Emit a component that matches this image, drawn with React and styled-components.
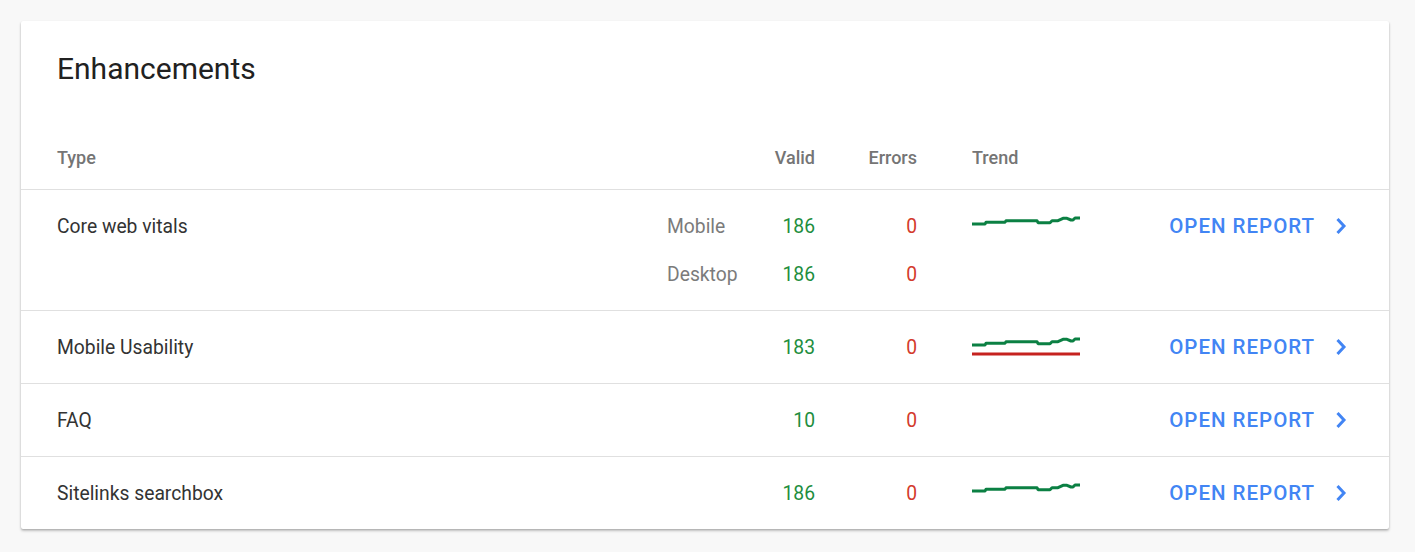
import React from "react";
import styled, { createGlobalStyle } from "styled-components";

const Global = createGlobalStyle`
  html, body { margin: 0; padding: 0; background: #f8f8f8; }
  body { font-family: Roboto, "Noto Sans", Arial, sans-serif; }
  * { box-sizing: border-box; }
`;

const Page = styled.div`
  padding: 21px 26px 23px 21px;
`;

const Card = styled.section`
  background: #fff;
  border-radius: 2px;
  box-shadow: 0 1px 2px rgba(0,0,0,0.18), 0 2px 3px rgba(0,0,0,0.18);
`;

const Title = styled.h2`
  margin: 0;
  padding: 30px 36px 0;
  height: 66px;
  font-size: 30px;
  line-height: 36px;
  font-weight: 400;
  color: #212121;
`;

const COLS = "1fr 80px 68px 102px 163px 267px";

const HeaderRow = styled.div`
  display: grid;
  grid-template-columns: ${COLS};
  margin-top: 47px;
  padding: 0 42px 7px 36px;
  height: 55px;
  align-items: center;
  font-size: 18px;
  font-weight: 500;
  color: #757575;
`;

const HeadCell = styled.div`
  line-height: 48px;
  text-align: ${(p) => (p.$right ? "right" : "left")};
  padding-left: ${(p) => (p.$trend ? "55px" : "0")};
`;

const Row = styled.div`
  display: grid;
  grid-template-columns: ${COLS};
  grid-auto-rows: 48px;
  align-items: center;
  border-top: 1px solid #e0e0e0;
  padding: 12px 42px 12px 36px;
  font-size: 19.3px;
  color: #333;
`;

const TypeCell = styled.div`
  grid-column: 1;
  grid-row: 1;
  color: #333;
`;

const DeviceCell = styled.div`
  grid-column: 2;
  color: #7b7b7b;
`;

const NumCell = styled.div`
  grid-column: ${(p) => p.$col};
  text-align: right;
  color: ${(p) => (p.$kind === "valid" ? "#1e8e3e" : "#d33a2c")};
`;

const TrendCell = styled.div`
  grid-column: 5;
  padding-left: 55px;
  display: flex;
  align-items: center;
  height: 20px;
`;

const ActionCell = styled.a`
  grid-column: 6;
  grid-row: 1;
  justify-self: end;
  display: flex;
  align-items: center;
  gap: 20px;
  color: #4285f4;
  font-size: 20.5px;
  font-weight: 500;
  letter-spacing: 1px;
  text-transform: uppercase;
  text-decoration: none;
  cursor: pointer;
`;

const GREEN = [
  [0, 8], [13, 8], [14, 6.3], [33, 6.3], [34, 4.7], [65, 4.7], [66, 6.7],
  [78, 6.7], [80, 4.7], [86, 4.7], [91, 2.3], [95, 2.3], [99, 4], [101, 4],
  [103, 2], [108, 2],
];

function Sparkline({ red }) {
  const pts = GREEN.map(([x, y]) => `${x},${y}`).join(" ");
  return (
    <svg width="108" height="20" viewBox="0 0 108 20">
      <polyline points={pts} fill="none" stroke="#0b8043" strokeWidth="3" strokeLinejoin="round" />
      {red && <line x1="0" y1="17" x2="108" y2="17" stroke="#c5221f" strokeWidth="3" />}
    </svg>
  );
}

function Chevron() {
  return (
    <svg width="12" height="18" viewBox="0 0 12 18">
      <path d="M2.5 2 L9 9 L2.5 16" fill="none" stroke="#4285f4" strokeWidth="3" />
    </svg>
  );
}

const rows = [
  {
    type: "Core web vitals",
    lines: [
      { device: "Mobile", valid: 186, errors: 0, trend: true },
      { device: "Desktop", valid: 186, errors: 0 },
    ],
  },
  { type: "Mobile Usability", lines: [{ valid: 183, errors: 0, trend: true, red: true }] },
  { type: "FAQ", lines: [{ valid: 10, errors: 0 }] },
  { type: "Sitelinks searchbox", lines: [{ valid: 186, errors: 0, trend: true }] },
];

export default function App() {
  return (
    <>
      <Global />
      <Page>
        <Card>
          <Title>Enhancements</Title>
          <HeaderRow>
            <HeadCell>Type</HeadCell>
            <HeadCell />
            <HeadCell $right>Valid</HeadCell>
            <HeadCell $right>Errors</HeadCell>
            <HeadCell $trend>Trend</HeadCell>
            <HeadCell />
          </HeaderRow>
          {rows.map((r) => (
            <Row key={r.type}>
              <TypeCell>{r.type}</TypeCell>
              {r.lines.map((l, i) => (
                <React.Fragment key={i}>
                  {l.device && <DeviceCell style={{ gridRow: i + 1 }}>{l.device}</DeviceCell>}
                  <NumCell $col={3} $kind="valid" style={{ gridRow: i + 1 }}>{l.valid}</NumCell>
                  <NumCell $col={4} $kind="error" style={{ gridRow: i + 1 }}>{l.errors}</NumCell>
                  {l.trend && (
                    <TrendCell style={{ gridRow: i + 1 }}>
                      <Sparkline red={l.red} />
                    </TrendCell>
                  )}
                </React.Fragment>
              ))}
              <ActionCell>
                Open report
                <Chevron />
              </ActionCell>
            </Row>
          ))}
        </Card>
      </Page>
    </>
  );
}
